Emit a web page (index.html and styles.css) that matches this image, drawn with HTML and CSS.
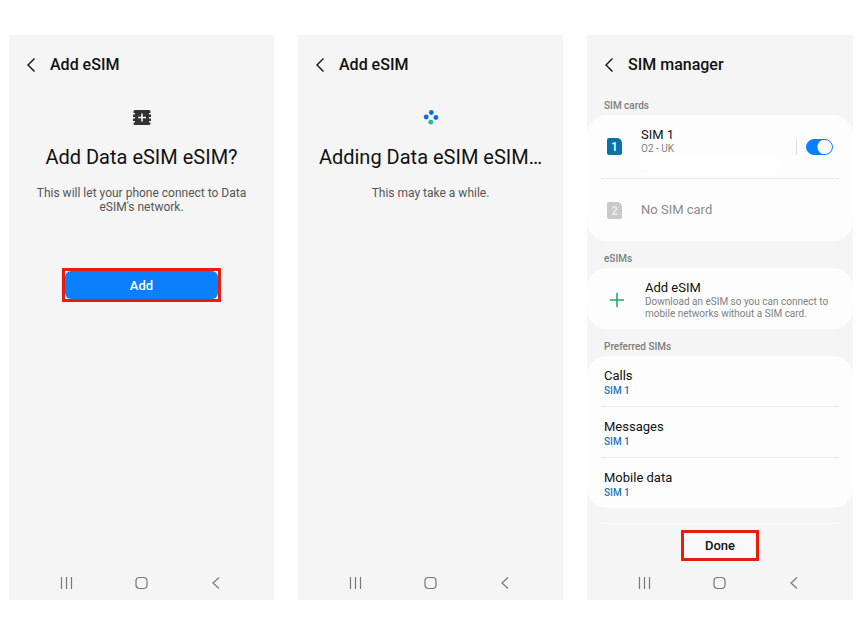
FILE: index.html
```html
<!DOCTYPE html>
<html lang="en">
<head>
    <meta charset="UTF-8">
    <meta name="viewport" content="width=device-width, initial-scale=1.0">
    <title>Add eSIM</title>
    <link rel="stylesheet" href="styles.css">
</head>
<body>

    <section class="phone">
        <header class="top-bar">
            <button class="icon-button" aria-label="Back">
                <svg width="10" height="16" viewBox="0 0 10 16"><path d="M8.5 1.5 2 8l6.5 6.5"/></svg>
            </button>
            <h2>Add eSIM</h2>
        </header>
        <main class="intro">
            <svg width="18" height="16" viewBox="0 0 18 16">
                <path fill="#333" d="M2 0h14a1.5 1.5 0 0 1 1.5 1.5V3H16v1.5h2V7h-2v1.5h2V11h-2v1.5h1.5v1A1.5 1.5 0 0 1 16 15H2A1.5 1.5 0 0 1 .5 13.5v-1H2V11H0V8.5h2V7H0V4.5h2V3H.5V1.5A1.5 1.5 0 0 1 2 0z"/>
                <path stroke="#fff" stroke-width="1.5" d="M9 3.5v8M5 7.5h8"/>
            </svg>
            <h1>Add Data eSIM eSIM?</h1>
            <p>This will let your phone connect to Data eSIM's network.</p>
            <div class="highlight add-highlight">
                <button class="add-button">Add</button>
            </div>
        </main>
        <nav class="nav-bar">
            <button class="icon-button" aria-label="Recent apps">
                <svg width="14" height="14" viewBox="0 0 14 14"><path d="M1.5 1v12M6.5 1v12M11.5 1v12"/></svg>
            </button>
            <button class="icon-button" aria-label="Home">
                <svg width="14" height="14" viewBox="0 0 14 14"><rect x="1" y="1.5" width="11" height="11" rx="3.5"/></svg>
            </button>
            <button class="icon-button" aria-label="Back">
                <svg width="14" height="14" viewBox="0 0 14 14"><path d="M9 1.5 3 7l6 5.5"/></svg>
            </button>
        </nav>
    </section>

    <section class="phone">
        <header class="top-bar">
            <button class="icon-button" aria-label="Back">
                <svg width="10" height="16" viewBox="0 0 10 16"><path d="M8.5 1.5 2 8l6.5 6.5"/></svg>
            </button>
            <h2>Add eSIM</h2>
        </header>
        <main class="intro">
            <svg width="16" height="16" viewBox="0 0 16 16">
                <circle cx="8.3" cy="2.5" r="2.4" fill="#0c6fdc"/>
                <circle cx="3.2" cy="7" r="2.4" fill="#0c6fdc"/>
                <circle cx="12.9" cy="7.5" r="2.4" fill="#0c6fdc"/>
                <circle cx="7.8" cy="12.2" r="2.4" fill="#1fc28a"/>
            </svg>
            <h1>Adding Data eSIM eSIM…</h1>
            <p>This may take a while.</p>
        </main>
        <nav class="nav-bar">
            <button class="icon-button" aria-label="Recent apps">
                <svg width="14" height="14" viewBox="0 0 14 14"><path d="M1.5 1v12M6.5 1v12M11.5 1v12"/></svg>
            </button>
            <button class="icon-button" aria-label="Home">
                <svg width="14" height="14" viewBox="0 0 14 14"><rect x="1" y="1.5" width="11" height="11" rx="3.5"/></svg>
            </button>
            <button class="icon-button" aria-label="Back">
                <svg width="14" height="14" viewBox="0 0 14 14"><path d="M9 1.5 3 7l6 5.5"/></svg>
            </button>
        </nav>
    </section>

    <section class="phone">
        <header class="top-bar">
            <button class="icon-button" aria-label="Back">
                <svg width="10" height="16" viewBox="0 0 10 16"><path d="M8.5 1.5 2 8l6.5 6.5"/></svg>
            </button>
            <h2>SIM manager</h2>
        </header>
        <main class="settings">
            <h3>SIM cards</h3>
            <div class="card">
                <div class="row sim-row">
                    <span class="sim-badge">1</span>
                    <div class="row-text">
                        <label class="row-title" for="sim1">SIM 1</label>
                        <span class="row-note">O2 - UK</span>
                        <span class="number-mask"></span>
                    </div>
                    <div class="switch-area">
                        <input type="checkbox" id="sim1" class="switch" checked>
                    </div>
                </div>
                <div class="row sim-row disabled">
                    <span class="sim-badge">2</span>
                    <span class="row-title">No SIM card</span>
                </div>
            </div>

            <h3>eSIMs</h3>
            <div class="card">
                <a class="row esim-row" href="#">
                    <svg width="14" height="14" viewBox="0 0 14 14"><path stroke="#27a862" stroke-width="1.6" d="M7 0v14M0 7h14"/></svg>
                    <span class="row-text">
                        <span class="row-title">Add eSIM</span>
                        <span class="row-note">Download an eSIM so you can connect to mobile networks without a SIM card.</span>
                    </span>
                </a>
            </div>

            <h3>Preferred SIMs</h3>
            <div class="card">
                <a class="row pref-row" href="#">
                    <span class="row-title">Calls</span>
                    <span class="row-value">SIM 1</span>
                </a>
                <a class="row pref-row" href="#">
                    <span class="row-title">Messages</span>
                    <span class="row-value">SIM 1</span>
                </a>
                <a class="row pref-row" href="#">
                    <span class="row-title">Mobile data</span>
                    <span class="row-value">SIM 1</span>
                </a>
            </div>

            <div class="done-area">
                <button class="highlight done-button">Done</button>
            </div>
        </main>
        <nav class="nav-bar">
            <button class="icon-button" aria-label="Recent apps">
                <svg width="14" height="14" viewBox="0 0 14 14"><path d="M1.5 1v12M6.5 1v12M11.5 1v12"/></svg>
            </button>
            <button class="icon-button" aria-label="Home">
                <svg width="14" height="14" viewBox="0 0 14 14"><rect x="1" y="1.5" width="11" height="11" rx="3.5"/></svg>
            </button>
            <button class="icon-button" aria-label="Back">
                <svg width="14" height="14" viewBox="0 0 14 14"><path d="M9 1.5 3 7l6 5.5"/></svg>
            </button>
        </nav>
    </section>

</body>
</html>
```

FILE: styles.css
```css
* {
    box-sizing: border-box;
}

body {
    margin: 0;
    padding: 35px 9px 34px;
    min-height: 100vh;
    display: grid;
    grid-template-columns: repeat(3, 1fr);
    gap: 24px;
    background-color: #fff;
    color: #111;
    font-family: Roboto, sans-serif;
    font-size: 13px;
}

h1, h2, h3, p {
    margin: 0;
}

button {
    font-family: inherit;
    cursor: pointer;
}

a {
    color: inherit;
    text-decoration: none;
}

.phone {
    display: flex;
    flex-direction: column;
    background-color: #f5f5f5;
}

.icon-button {
    display: flex;
    padding: 0;
    border: none;
    background: none;
    color: inherit;
}

.icon-button svg {
    fill: none;
    stroke: currentColor;
    stroke-width: 1.4;
}

/* top bar */
.top-bar {
    display: flex;
    align-items: center;
    gap: 14px;
    height: 59px;
    padding: 0 17px;
}

.top-bar h2 {
    font-size: 16px;
    font-weight: 500;
}

/* intro screens */
.intro {
    flex: 1;
    display: flex;
    flex-direction: column;
    align-items: center;
    padding-top: 16px;
    text-align: center;
}

.intro h1 {
    margin-top: 18px;
    font-size: 20px;
    font-weight: 400;
    line-height: 26px;
}

.intro p {
    max-width: 230px;
    margin-top: 16px;
    color: #555;
    font-size: 12px;
    line-height: 14px;
}

.highlight {
    border: 3px solid #ea1c0a;
}

.add-highlight {
    width: 60%;
    margin-top: 54px;
    background-color: #fff;
}

.add-button {
    display: block;
    width: 100%;
    height: 28px;
    border: none;
    border-radius: 6px;
    background-color: #0a80ff;
    color: #fff;
    font-size: 13px;
    font-weight: 500;
}

/* settings screen */
.settings {
    flex: 1;
}

.settings h3 {
    padding: 10px 17px 1px;
    color: #7d7d7d;
    font-size: 10px;
    font-weight: 500;
    line-height: 16px;
}

.settings h3:first-child {
    padding-top: 4px;
}

.card {
    padding: 0 14px;
    border-radius: 20px;
    background-color: #fdfdfd;
}

.row {
    display: flex;
}

.row + .row {
    border-top: 1px solid #e8e8e8;
}

.row-text {
    flex: 1;
    display: flex;
    flex-direction: column;
}

.row-title {
    font-size: 13px;
    line-height: 16px;
}

.row-note {
    color: #808080;
    font-size: 10px;
    line-height: 12px;
}

.row-value {
    color: #1a75bb;
    font-size: 10px;
    font-weight: 500;
    line-height: 14px;
}

.sim-row {
    align-items: center;
    gap: 19px;
    height: 63px;
    padding-left: 6px;
}

.sim-badge {
    width: 15px;
    height: 17px;
    border-radius: 2px 5px 2px 2px;
    background-color: #0873a8;
    color: #fff;
    font-size: 12px;
    font-weight: 500;
    line-height: 18px;
    text-align: center;
}

.sim-row .row-text {
    padding-top: 2px;
}

.number-mask {
    width: 136px;
    height: 12px;
    margin-top: 2px;
    background-color: #fff;
}

.disabled .row-title {
    color: #8c8c8c;
}

.disabled .sim-badge {
    background-color: #c9c9c9;
    color: #eee;
}

.switch-area {
    display: flex;
    padding: 0 6px 0 9px;
    border-left: 1px solid #dcdcdc;
}

.switch {
    appearance: none;
    width: 27px;
    height: 16px;
    margin: 0;
    border: 1px solid #0a80ff;
    border-radius: 8px;
    background: radial-gradient(circle at 18px 7px, #fff 7px, #0a80ff 8px);
    cursor: pointer;
}

.esim-row {
    align-items: center;
    gap: 21px;
    height: 61px;
    padding: 2px 0 0 9px;
}

.pref-row {
    flex-direction: column;
    justify-content: center;
    height: 50px;
    padding: 3px 3px 0;
}

.pref-row + .pref-row {
    height: 51px;
}

.done-area {
    margin: 15px 14px 0;
    padding-top: 6px;
    border-top: 1px solid #fbfbfb;
    text-align: center;
}

.done-button {
    width: 78px;
    height: 31px;
    padding: 0;
    background-color: #f9f9f9;
    color: #111;
    font-size: 13px;
    font-weight: 500;
}

/* system navigation */
.nav-bar {
    display: flex;
    justify-content: center;
    gap: 61px;
    padding: 10px 0;
    color: #777;
}

.nav-bar svg {
    stroke-width: 1.2;
}
```
